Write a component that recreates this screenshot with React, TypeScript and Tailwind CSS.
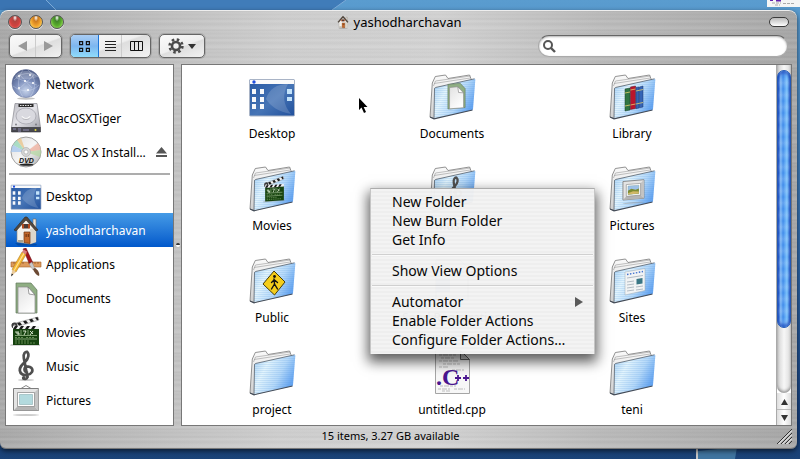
import type { ReactNode } from "react";

const font = "font-['Lucida_Grande','Noto_Sans',sans-serif]";

const metal =
  "bg-[repeating-linear-gradient(180deg,rgba(255,255,255,0.1)_0px,rgba(0,0,0,0.03)_1px,rgba(255,255,255,0.06)_3px,rgba(0,0,0,0.02)_4px,rgba(255,255,255,0.03)_7px,rgba(0,0,0,0.03)_9px,rgba(255,255,255,0.1)_11px,rgba(0,0,0,0.02)_14px,rgba(255,255,255,0.08)_17px,rgba(255,255,255,0.1)_19px),linear-gradient(90deg,#a8a8a8_0%,#b8b8b8_12%,#cecece_35%,#d2d2d2_55%,#bababa_75%,#a6a6a6_100%)]";

const aqua =
  "bg-[linear-gradient(160deg,#fafafa_0%,#efefef_50%,#dedede_54%,#f2f2f2_100%)]";

/* ---------- artwork ---------- */

function Defs() {
  return (
    <svg className="absolute size-0" aria-hidden="true">
      <defs>
        <linearGradient id="folderFront" x1="0" y1="0" x2="1" y2="0.5">
          <stop offset="0" stopColor="#a2cdf2" />
          <stop offset="0.35" stopColor="#e2f4fd" />
          <stop offset="0.7" stopColor="#b4d8f9" />
          <stop offset="1" stopColor="#66a5f1" />
        </linearGradient>
        <linearGradient id="folderBack" x1="0" y1="0" x2="0" y2="1">
          <stop offset="0" stopColor="#fafafa" />
          <stop offset="1" stopColor="#cfcfcf" />
        </linearGradient>
        <pattern id="folderLines" width="4" height="2" patternUnits="userSpaceOnUse">
          <rect width="4" height="1" fill="#4f93dd" opacity="0.16" />
        </pattern>
        <radialGradient id="globe" cx="0.5" cy="0.75" r="0.75">
          <stop offset="0" stopColor="#c5d2ea" />
          <stop offset="0.5" stopColor="#7d8fbb" />
          <stop offset="1" stopColor="#46557f" />
        </radialGradient>
        <linearGradient id="steel" x1="0" y1="0" x2="1" y2="1">
          <stop offset="0" stopColor="#bdbdc4" />
          <stop offset="0.5" stopColor="#e4e4e9" />
          <stop offset="1" stopColor="#a5a5ad" />
        </linearGradient>
        <linearGradient id="disc" x1="0" y1="0" x2="1" y2="1">
          <stop offset="0" stopColor="#dcdcdc" />
          <stop offset="0.5" stopColor="#f5f5f5" />
          <stop offset="1" stopColor="#aeaeae" />
        </linearGradient>
        <linearGradient id="deskBlue" x1="0" y1="0" x2="1" y2="1">
          <stop offset="0" stopColor="#2658a3" />
          <stop offset="0.55" stopColor="#4674b5" />
          <stop offset="1" stopColor="#21509c" />
        </linearGradient>
        <linearGradient id="paper" x1="0" y1="0" x2="0.6" y2="1">
          <stop offset="0" stopColor="#e2e2e2" />
          <stop offset="1" stopColor="#fdfdfd" />
        </linearGradient>
      </defs>
    </svg>
  );
}

function Art({ box, className, children }: { box: number; className: string; children: ReactNode }) {
  return (
    <svg viewBox={`0 0 ${box} ${box}`} className={className} aria-hidden="true">
      {children}
    </svg>
  );
}

function HouseShape() {
  return (
    <g>
      <path d="M5 29 L27 30 L26 31.5 L8 31.5 Z" fill="#000" opacity="0.2" />
      <path d="M23 5h3v9h-3z" fill="#e9e4dc" stroke="#75695c" strokeWidth="0.6" />
      <path d="M7 14 L16 5 L26 14 V28 L20 30 L7 28 Z" fill="#f4f1ec" stroke="#8d8478" strokeWidth="0.6" />
      <path d="M20 15 L26 14 V28 L20 30 Z" fill="#dcd6cb" />
      <path d="M4 16 L15 3 L17 3 L28 16 L26 17 L16 6 L6 17 Z" fill="#54483e" stroke="#2e2620" strokeWidth="0.6" />
      <path d="M14 18h6v11.500l-6-1z" fill="#c4692c" stroke="#6e3513" strokeWidth="0.7" />
      <path d="M15.500 20h1.300v3h-1.300zM17.700 20h1.300v3h-1.300z" fill="#7a3a13" />
      <path d="M13.500 10h5v4.500h-5z" fill="#4c3a35" />
      <path d="M12 10h2v4.500h-2zM18 10h2v4.500h-2z" fill="#b44a1d" />
      <path d="M8 26h5v2.500l-5-.8z" fill="#a9a28f" />
    </g>
  );
}

function ClapperShape() {
  return (
    <g>
      <path d="M1 28h29v2H0z" fill="#888" opacity="0.35" />
      <path d="M2 8 L28 1 L29 4 L3 12 Z" fill="#f4f4f4" stroke="#555" strokeWidth="0.4" />
      <path d="M7 7l3-.8 2 2.500-3 1zM13 5.200l3-.8 2 2.500-3 1zM19 3.500l3-.8 2 2.600-3 .9zM25 1.800l2.500-.7 1 2.800-1.500.4z" fill="#1c1c1c" />
      <circle cx="4.500" cy="9.500" r="3" fill="#3c3c3c" />
      <circle cx="4.500" cy="9.500" r="1.100" fill="#bbb" />
      <path d="M3 12h26v17H3z" fill="#16420f" />
      <path d="M3 10h26v3H3z" fill="#f0f0f0" />
      <path d="M5 10h3l-2 3H3zM11 10h3l-2 3H9zM17 10h3l-2 3h-3zM23 10h3l-2 3h-3z" fill="#1a1a1a" />
      <path d="M5 19.500h22M5 23h22M11 14v5M18 14v5" stroke="#9dbb8d" strokeWidth="0.8" />
      <path d="M6 15v2h3v2M8 15v4M13 15h3l-2 4M20 15l3 3M23 15l-3 4" stroke="#e4efd9" strokeWidth="0.9" fill="none" />
      <path d="M5 21.500h9M16 21.500h8M5 25h14M5 27h20" stroke="#76a062" strokeWidth="0.8" strokeDasharray="2 1" />
    </g>
  );
}

function ClefShape() {
  return (
    <g fill="none" stroke="#4f4f4f" strokeLinecap="round">
      <ellipse cx="16" cy="30" rx="8" ry="1" fill="#aaa" stroke="none" opacity="0.6" />
      <path d="M17.500 27 L13.800 8 C13 3.500 15.500 1.500 17 1.800 C19.500 4 18.500 8.500 15.500 11.500 C11.500 15 9.500 17 9.800 20.500 C10.200 24 13.500 25.500 17 25 C22 24 23.500 20.500 21.500 18 C19 15.500 14.500 16.500 14.500 19.500 C14.500 21 15.500 22 17 22.300" strokeWidth="2.700" />
      <path d="M17.500 26 C17.800 29.500 14.500 30 13 28.500" strokeWidth="2" />
      <circle cx="13.800" cy="27.800" r="1.900" fill="#4f4f4f" stroke="none" />
    </g>
  );
}

function FrameShape({ scene }: { scene?: boolean }) {
  return (
    <g>
      <ellipse cx="16" cy="31" rx="13" ry="0.9" fill="#999" opacity="0.5" />
      {!scene && <path d="M11 4.500l5-3 5 3" stroke="#888" fill="none" />}
      <path d="M3.500 4.500h25v22h-25z" fill="#e4e4e4" stroke="#7d7d7d" strokeWidth="1" />
      <path d="M3.500 26.500l5-5h15l5 5z" fill="#b4b4b4" />
      <path d="M28.500 4.500l-5 5v12l5 5z" fill="#c4c4c4" />
      <path d="M7.500 8.500h17v14h-17z" fill="#fff" stroke="#909090" strokeWidth="0.8" />
      <path d="M9.500 10.500h13v10h-13z" fill={scene ? "#9dc1e8" : "#b3dade"} stroke="#7ba0a5" strokeWidth="0.5" />
      {scene && <path d="M9.500 16l4-2 5 1.500 4-1v6h-13z" fill="#7d8c33" />}
      {scene && <path d="M9.500 19l6-2 7 1v2.500h-13z" fill="#d1b867" />}
    </g>
  );
}

function PaperShape() {
  return (
    <g>
      <path d="M6 1h15l6 7v23H6z" fill="#8fae83" stroke="#62785b" strokeWidth="0.7" />
      <path d="M8 5h10l7 8v18H8z" fill="url(#paper)" stroke="#8b8b8b" strokeWidth="0.7" />
      <path d="M18 5l1 7 6 1z" fill="#fff" stroke="#777" strokeWidth="0.7" />
    </g>
  );
}

function DesktopShape() {
  return (
    <g>
      <rect x="1.500" y="7.500" width="45" height="36.500" rx="1" fill="url(#deskBlue)" stroke="#a9b4c6" />
      <path d="M18 27 C21 17 29 12 40 12 C34 22 35 33 43 42 C31 40 22 34 18 27z" fill="#fff" opacity="0.16" />
      <path d="M2 8h44v4H2z" fill="#fafafa" />
      <circle cx="6" cy="10" r="1.700" fill="#1f4fe0" />
      <g fill="#f6f8fb">
        <path d="M4 17h4v5H4zM12 17h4v5h-4zM4 25h4v5H4zM12 25h4v5h-4zM4 32h4v5H4zM12 32h4v5h-4z" />
        <path d="M39 17h5v5h-5zM39 25h5v4h-5z" fill="#c4e3fa" />
      </g>
    </g>
  );
}

function NetworkShape() {
  return (
    <g>
      <ellipse cx="16" cy="30.500" rx="9" ry="1.200" fill="#888" opacity="0.5" />
      <circle cx="16" cy="15.500" r="14" fill="url(#globe)" stroke="#66739a" strokeWidth="0.5" />
      <path d="M4 12C9 5 22 3 28 9M3 18c8 6 18 7 26-1M13 2c-6 8-6 18 0 27M18 2c8 7 9 18 2 27M9 6l13 14M24 7L8 22M6 10l21 7" stroke="#dce5f7" strokeWidth="0.5" fill="none" opacity="0.65" />
      <g fill="#fff">
        <circle cx="9" cy="8" r="1" />
        <circle cx="20" cy="7" r="1" />
        <circle cx="15" cy="13" r="1.100" />
        <circle cx="23" cy="15" r="1.100" />
        <circle cx="9" cy="20" r="1" />
        <circle cx="18" cy="22" r="1.100" />
      </g>
      <path d="M5 9C8 1 24 1 27 9C21 12 11 12 5 9z" fill="#fff" opacity="0.22" />
    </g>
  );
}

function DriveShape() {
  return (
    <g>
      <path d="M5 1.500h22l3.500 24h-29z" fill="url(#steel)" stroke="#88888f" strokeWidth="0.7" />
      <path d="M8.500 2h15v3h-15z" fill="#2b2b2b" />
      <path d="M10 3.500h12" stroke="#ddd" strokeDasharray="1.500 1" />
      <ellipse cx="16" cy="14" rx="10" ry="8" fill="#d9d9df" stroke="#a5a5ad" strokeWidth="0.8" />
      <path d="M12 14.500c1 3 7 3 8 0" stroke="#fff" strokeWidth="1.500" fill="none" />
      <path d="M12 15.500c1 2.500 7 2.500 8 0" stroke="#85858d" strokeWidth="0.6" fill="none" />
      <path d="M1.500 25.500h29v4.500h-29z" fill="#48484f" stroke="#303036" strokeWidth="0.6" />
      <path d="M3 27h3M8 27h3M8 29h3M13 28h6" stroke="#8d8ab0" strokeWidth="1" />
      <circle cx="25.500" cy="28" r="1" fill="#e7dc3d" />
      <circle cx="6" cy="22.500" r="0.900" fill="#77777f" />
      <circle cx="26" cy="22.500" r="0.900" fill="#77777f" />
    </g>
  );
}

function DvdShape() {
  return (
    <g>
      <circle cx="16" cy="16" r="15" fill="url(#disc)" stroke="#8a8a8a" strokeWidth="0.8" />
      <path d="M16 16L3 9A15 15 0 0 1 7 4z" fill="#9bd9bb" opacity="0.8" />
      <path d="M16 16L7 4a15 15 0 0 1 4-2z" fill="#e8c58d" opacity="0.8" />
      <path d="M16 16L1 16A15 15 0 0 1 3 9z" fill="#9fc3ef" opacity="0.7" />
      <path d="M16 16L28 7a15 15 0 0 1 3 7z" fill="#f0b3a1" opacity="0.8" />
      <path d="M16 16l15-2a15 15 0 0 1-1 7z" fill="#b3d7a0" opacity="0.7" />
      <circle cx="16" cy="16" r="4.500" fill="#d5d5d5" stroke="#aaa" strokeWidth="0.6" />
      <circle cx="16" cy="16" r="2" fill="#fff" stroke="#999" strokeWidth="0.5" />
      <text x="16.500" y="27" textAnchor="middle" fontSize="7" fontWeight="900" fontStyle="italic" fontFamily="Liberation Sans, sans-serif" fill="#111">DVD</text>
      <ellipse cx="16.500" cy="28.700" rx="7" ry="1.100" fill="#222" />
    </g>
  );
}

function AppsShape() {
  return (
    <g>
      <path d="M1 14h30v5H1z" fill="#dd9a5c" stroke="#a3622d" strokeWidth="0.6" />
      <path d="M4 14v2M7 14v2M10 14v2M13 14v2M19 14v2M22 14v2M25 14v2M28 14v2" stroke="#7d451b" strokeWidth="0.6" />
      <path d="M13 1l3-1 7 15-3 2z" fill="#a5161c" stroke="#5f0c10" strokeWidth="0.5" />
      <path d="M19 16l3-2 3 7-2 1z" fill="#c9c9c9" stroke="#888" strokeWidth="0.4" />
      <path d="M23 21l2-1c3 2 5 5 4 8-3-1-5-4-6-7z" fill="#6c4a34" />
      <path d="M12 4l4 2.500L6 24l-4-2.500z" fill="#f4b632" stroke="#a4711a" strokeWidth="0.5" />
      <path d="M13.500 5l1 .6L4.500 23l-1-.6z" fill="#fde396" />
      <path d="M12 4l1.500-2.500 3.500 2-1 3z" fill="#d9837e" />
      <path d="M2 21.500L6 24l-4.500 4z" fill="#eacb9d" />
      <path d="M1.700 25.500l1.600 1L1 28.500z" fill="#222" />
    </g>
  );
}

function Folder({ children }: { children?: ReactNode }) {
  return (
    <Art box={48} className="size-12">
      <path d="M2 45 L4.300 11 L7.300 4.500 L17.500 3 L20 6.500 L41.500 3 L43.500 8 L42 36 L6 46.500 Z" fill="url(#folderBack)" stroke="#777" strokeWidth="0.8" />
      <path d="M5.500 14L7.500 9l35-5M6 11.500L42 6" stroke="#999" strokeWidth="0.6" fill="none" />
      <path d="M7.500 15.500 L46.500 6.800 Q47.500 6.700 47.300 8 L45 37 Q44.900 38 44 38.300 L6 46.500 L6.500 17 Q6.500 15.800 7.500 15.500Z" fill="url(#folderFront)" />
      <path d="M7.500 15.500 L46.500 6.800 Q47.500 6.700 47.300 8 L45 37 Q44.900 38 44 38.300 L6 46.500 L6.500 17 Q6.500 15.800 7.500 15.500Z" fill="url(#folderLines)" />
      <path d="M6 46.500L6.500 17Q6.500 15.800 7.500 15.500L46.500 6.800" fill="none" stroke="#555f6b" strokeWidth="0.8" />
      <path d="M2 45L6 46.800L44.500 38" fill="none" stroke="#444c58" strokeWidth="1.100" />
      {children}
    </Art>
  );
}

function CppFile() {
  return (
    <Art box={48} className="size-12">
      <path d="M7.500 2.500h25l9 9v34h-34z" fill="#f7f7f7" stroke="#a5a5a5" />
      <path d="M32.500 2.500v9h9z" fill="#cfcfcf" stroke="#555" strokeWidth="0.9" />
      <path d="M11 7h17M13 10h14M11 13h19M15 16h17M11 19h10M24 22h12M12 38h16M10 41h12M26 41h11M14 43h8" stroke="#b5b5b5" strokeWidth="0.9" strokeDasharray="3 1 5 1" />
      <text x="8" y="37" fontSize="24" fontWeight="700" fontFamily="Liberation Serif, serif" fill="#4a1690">.C</text>
      <path d="M27 30h6M30 27v6M35 30h6M38 27v6" stroke="#4a1690" strokeWidth="1.800" />
    </Art>
  );
}

/* ---------- data ---------- */

const side = "size-8 shrink-0";

const volumes = [
  { name: "Network", art: <NetworkShape /> },
  { name: "MacOSXTiger", art: <DriveShape /> },
  { name: "Mac OS X Install…", art: <DvdShape />, eject: true },
];

const places = [
  { name: "Desktop", art: <g transform="scale(0.667)"><DesktopShape /></g> },
  { name: "yashodharchavan", art: <HouseShape />, selected: true },
  { name: "Applications", art: <AppsShape /> },
  { name: "Documents", art: <PaperShape /> },
  { name: "Movies", art: <ClapperShape /> },
  { name: "Music", art: <ClefShape /> },
  { name: "Pictures", art: <FrameShape /> },
];

const files = [
  { name: "Desktop", icon: <Art box={48} className="size-12"><DesktopShape /></Art> },
  { name: "Documents", icon: <Folder><g transform="translate(15 12) skewY(-5) scale(0.82)"><PaperShape /></g></Folder> },
  {
    name: "Library",
    icon: (
      <Folder>
        <g strokeWidth="0.5">
          <path d="M17 17l5-1v22l-5 1z" fill="#2f7443" stroke="#153c20" />
          <path d="M22.500 15l5-1v22.500l-5 1z" fill="#b9152c" stroke="#5f0b18" />
          <path d="M28 15.500l3-.5v21l-3 .7zM31.500 15l3.500-1v21l-3.500.8z" fill="#3564b5" stroke="#18356e" />
        </g>
        <path d="M17 21l5-1M17 34l5-1M22.500 18l5-1M22.500 33l5-1M28 19l7-1.500M28 32l7-1.500" stroke="#e6cf6c" strokeWidth="0.8" />
      </Folder>
    ),
  },
  { name: "Movies", icon: <Folder><g transform="translate(15 13) skewY(-4) scale(0.72 0.85)"><ClapperShape /></g></Folder> },
  { name: "Music", icon: <Folder><g transform="translate(14 12) scale(0.85)"><ClefShape /></g></Folder> },
  { name: "Pictures", icon: <Folder><g transform="translate(12 14) skewY(-5) scale(0.84)"><FrameShape scene /></g></Folder> },
  {
    name: "Public",
    icon: (
      <Folder>
        <path d="M26 15l11 11-10.500 13L15 28z" fill="#f4cd1b" stroke="#473c07" strokeWidth="1" strokeLinejoin="round" />
        <circle cx="26.500" cy="20.500" r="1.400" fill="#111" />
        <path d="M26 23l.5 5 3 5M26.500 28l-3 5M26 24l-2.500 2.500M26.500 24l3 2.500" stroke="#111" strokeWidth="1.400" fill="none" strokeLinecap="round" />
      </Folder>
    ),
  },
  { name: "Send Registration", icon: <Art box={48} className="size-12"><path d="M8 4h24l8 8v32H8z" fill="#f4f4f4" stroke="#999" /><path d="M8 22h14v14H8z" fill="#7da7e0" /></Art> },
  {
    name: "Sites",
    icon: (
      <Folder>
        <path d="M17 16l20-3.500v22L17 39z" fill="#f1f3f4" stroke="#9aa9b5" strokeWidth="0.5" />
        <path d="M19 18.500l16-3" stroke="#3e70cf" strokeWidth="1.400" strokeDasharray="1.500 1.500" />
        <path d="M19 22l16-2.500M19 26l7-1M19 29l7-1M19 32l7-1M19 35l7-1M28 31l7-1M28 34l7-1" stroke="#aab4bd" strokeWidth="0.9" />
        <path d="M28.500 23l6-1v5.500l-6 1z" fill="#3a7684" />
      </Folder>
    ),
  },
  { name: "project", icon: <Folder /> },
  { name: "untitled.cpp", icon: <CppFile /> },
  { name: "teni", icon: <Folder /> },
];

const menuGroups = [
  ["New Folder", "New Burn Folder", "Get Info"],
  ["Show View Options"],
  ["Automator", "Enable Folder Actions", "Configure Folder Actions…"],
];

/* ---------- window parts ---------- */

function TitleBar() {
  const light = "size-3.5 rounded-full border border-[#555] shadow-[0_1px_0_rgba(255,255,255,0.7)]";
  return (
    <header className="grid h-6 shrink-0 grid-cols-[1fr_auto_1fr] items-center px-2">
      <div className="flex gap-[7px]">
        <button aria-label="Close" className={`${light} bg-[radial-gradient(ellipse_at_50%_15%,#fff_0%,#b3443f_25%,#d3433f_60%,#ff9d92_100%)]`} />
        <button aria-label="Minimize" className={`${light} bg-[radial-gradient(ellipse_at_50%_15%,#fff_0%,#cc7b20_25%,#f0a12c_55%,#ffee7c_100%)]`} />
        <button aria-label="Zoom" className={`${light} bg-[radial-gradient(ellipse_at_50%_15%,#fff_0%,#42852a_25%,#59ad2b_55%,#bff584_100%)]`} />
      </div>
      <h1 className="flex items-center gap-1 text-[13px] leading-4">
        <Art box={32} className="size-3.5"><HouseShape /></Art>
        yashodharchavan
      </h1>
      <button aria-label="Toggle toolbar" className="h-2.5 w-5 justify-self-end rounded-full border-[1.5px] border-[#3c3c3c] bg-linear-to-b from-[#bbb] to-white" />
    </header>
  );
}

function Toolbar() {
  const group = "flex h-6 overflow-hidden rounded-[5px] border border-[#666] shadow-[0_0_0_1px_rgba(0,0,0,0.12)] " + aqua;
  const cell = "flex items-center justify-center";
  return (
    <div className="flex shrink-0 items-center gap-2 px-[9px]">
      <div className={`${group} w-[53px]`}>
        <button aria-label="Back" className={`${cell} flex-1 border-r border-[#ccc]`}>
          <svg viewBox="0 0 9 10" className="h-2.5 w-[9px]"><path d="M9 0v10L0 5z" fill="#999" /></svg>
        </button>
        <button aria-label="Forward" className={`${cell} flex-1`}>
          <svg viewBox="0 0 9 10" className="h-2.5 w-[9px]"><path d="M0 0v10l9-5z" fill="#999" /></svg>
        </button>
      </div>
      <div className={`${group} w-[81px]`}>
        <button aria-label="Icon view" className={`${cell} w-7 border-r border-[#1b74d8] bg-linear-to-b from-[#a9cdf4] via-[#7db6f0] to-[#8fdcfb]`}>
          <svg viewBox="0 0 11 11" className="size-[11px]" fill="none" stroke="#111" strokeWidth="1.200"><path d="M.6.6h3v3h-3zM7.400.6h3v3h-3zM.6 7.400h3v3h-3zM7.400 7.400h3v3h-3z" /></svg>
        </button>
        <button aria-label="List view" className={`${cell} flex-1 border-r border-[#ccc]`}>
          <svg viewBox="0 0 11 10" className="h-2.5 w-[11px]" stroke="#222"><path d="M0 .5h11M0 3.500h11M0 6.500h11M0 9.500h11" /></svg>
        </button>
        <button aria-label="Column view" className={`${cell} w-7`}>
          <svg viewBox="0 0 13 10" className="h-2.5 w-[13px]" fill="none" stroke="#111"><path d="M.5.5h12v9H.5zM4.500.5v9M8.500.5v9" /></svg>
        </button>
      </div>
      <button aria-label="Action" className={`${group} w-[46px] items-center justify-center gap-1`}>
        <svg viewBox="0 0 16 16" className="size-4" fill="none" stroke="#4a4a4a">
          <circle cx="8" cy="8" r="4" strokeWidth="2.600" />
          <circle cx="8" cy="8" r="6.400" strokeWidth="2.600" strokeDasharray="2.510 2.516" />
        </svg>
        <svg viewBox="0 0 8 5" className="h-[5px] w-2"><path d="M0 0h8L4 5z" fill="#333" /></svg>
      </button>
      <label className="ml-auto flex h-[22px] w-[250px] items-center rounded-full border border-[#aaa] border-t-[#666] bg-white pl-1 shadow-[inset_0_1px_2px_rgba(0,0,0,0.3)]">
        <svg viewBox="0 0 13 13" className="size-[13px]" fill="none" stroke="#555" strokeWidth="2"><circle cx="5" cy="5" r="4" /><path d="M8 8l4 4" strokeWidth="2.400" /></svg>
        <input type="text" aria-label="Search" className="ml-1 min-w-0 flex-1 bg-transparent text-xs outline-none" />
      </label>
    </div>
  );
}

function SideRow({ name, art, selected, eject }: { name: string; art: ReactNode; selected?: boolean; eject?: boolean }) {
  return (
    <li className={`flex h-[34px] items-center gap-1 pl-1 ${selected ? "bg-linear-to-b from-[#459be6] to-[#0058cb] text-white" : ""}`}>
      <button className="flex min-w-0 flex-1 items-center gap-1 text-left">
        <Art box={32} className={side}>{art}</Art>
        <span className="pt-0.5 whitespace-nowrap">{name}</span>
      </button>
      {eject && (
        <button aria-label="Eject" className="mr-1.5">
          <svg viewBox="0 0 11 11" className="size-[11px]" fill="#555"><path d="M5.500 0L11 6.500H0zM0 8h11v2H0z" /></svg>
        </button>
      )}
    </li>
  );
}

function Sidebar() {
  return (
    <nav className="w-[169px] shrink-0 overflow-hidden border border-[#777] bg-white pt-0.5 text-xs leading-4">
      <ul>{volumes.map((v) => <SideRow key={v.name} {...v} />)}</ul>
      <hr className="mx-[3px] my-1 h-0.5 border-0 bg-[#adadad]" />
      <ul>{places.map((p) => <SideRow key={p.name} {...p} />)}</ul>
    </nav>
  );
}

function ScrollBar() {
  const arrow = "flex h-4 shrink-0 items-center justify-center border-t border-[#bbb] bg-linear-to-r from-[#ddd] via-white to-[#ddd]";
  return (
    <div className="flex w-[15px] shrink-0 flex-col border-l border-[#aaa]">
      <div className="flex flex-1 flex-col rounded-b-full bg-linear-to-r from-[#cfcfcf] via-[#f7f7f7] to-[#dcdcdc] pt-[5px] shadow-[inset_0_-2px_3px_rgba(0,0,0,0.35)]">
        <div className="h-4/5 rounded-full border border-[#2358b4] bg-[repeating-linear-gradient(180deg,rgba(255,255,255,0.16)_0px,rgba(255,255,255,0)_6px,rgba(255,255,255,0.16)_12px),linear-gradient(90deg,#1c55c9_0%,#7db9f6_22%,#3f8bea_42%,#7cc3fd_75%,#3570cf_100%)] shadow-[inset_0_-3px_3px_rgba(20,60,180,0.6),inset_0_3px_3px_rgba(20,60,180,0.6)]" />
      </div>
      <button aria-label="Scroll up" className={`${arrow} border-t-transparent`}>
        <svg viewBox="0 0 7 6" className="h-1.5 w-[7px]"><path d="M3.500 0L7 6H0z" fill="#333" /></svg>
      </button>
      <button aria-label="Scroll down" className={arrow}>
        <svg viewBox="0 0 7 6" className="h-1.5 w-[7px]"><path d="M0 0h7L3.500 6z" fill="#333" /></svg>
      </button>
    </div>
  );
}

function ContextMenu() {
  return (
    <div role="menu" className="absolute top-[188px] left-[370px] w-[225px] border border-b-0 border-[#c4c4c4] border-t-[#aaa] bg-[repeating-linear-gradient(180deg,#f3f3f3_0px,#f3f3f3_2px,#eeeeee_2px,#eeeeee_4px)] pt-[3px] pb-[5px] text-sm leading-[19px] opacity-97 shadow-[0_6px_12px_2px_rgba(0,0,0,0.65)]">
      {menuGroups.map((items, i) => (
        <div key={items[0]}>
          {i > 0 && <div role="separator" className="mx-px my-[5px] h-0.5 border-t border-[#cfcfcf] bg-[#fafafa]" />}
          {items.map((item) => (
            <button key={item} role="menuitem" className="flex h-[19px] w-full items-center justify-between pr-[11px] pl-[21px] text-left whitespace-nowrap">
              {item}
              {item === "Automator" && <svg viewBox="0 0 8 10" className="h-2.5 w-2"><path d="M0 0l8 5-8 5z" fill="#555" /></svg>}
            </button>
          ))}
        </div>
      ))}
    </div>
  );
}

function Backdrop() {
  return (
    <div aria-hidden="true">
      <svg viewBox="0 0 350 10" className="absolute top-0 left-0 h-2.5 w-[350px]">
        <path d="M0 0h46l10 10H0z" fill="#3a74b2" />
        <path d="M46 0h300l-14 10H56z" fill="#407cb9" />
        <path d="M46 0l10 10M346 0l-14 10" stroke="#7dabd7" />
      </svg>
      <svg viewBox="0 0 33 8" className="absolute top-0 right-0 h-2 w-[33px]">
        <path d="M0 0h33v7H0z" fill="#f5f5f5" />
        <path d="M3 0h3v1H3zM9 0h5v1.500H9z" fill="#6322ae" />
        <path d="M5 3h9M16 3.500h11M8 5h5" stroke="#aaa" strokeDasharray="3 1" />
      </svg>
      <svg viewBox="0 0 42 12" className="absolute bottom-0 left-[695px] h-3 w-[42px]">
        <path d="M1 0h2v12H1z" fill="#c5c5c5" />
        <path d="M3 4l39-4-2 12H3z" fill="#3f749f" />
      </svg>
    </div>
  );
}

export default function App() {
  return (
    <div className={`relative flex h-screen flex-col overflow-hidden bg-[linear-gradient(180deg,#5a9ccf_0%,#4585c0_25%,#2a62a4_60%,#163f7c_92%,#1b4377_100%)] text-black ${font}`}>
      <Defs />
      <Backdrop />
      <div className={`relative mt-2.5 mr-[3px] mb-2.5 flex min-h-0 flex-1 flex-col rounded-t-lg rounded-b-md shadow-[inset_0_1px_0_#eee,inset_0_-1px_0_#777,0_2px_5px_rgba(0,0,0,0.6)] ${metal}`}>
        <TitleBar />
        <Toolbar />
        <div className="mt-1.5 flex min-h-0 flex-1 px-[5px]">
          <Sidebar />
          <div className="flex w-[7px] shrink-0 items-center justify-center">
            <span className="size-1 rounded-full border-t-2 border-[#333] bg-white" />
          </div>
          <main className="flex min-w-0 flex-1 border border-[#777] bg-white">
            <ul className="grid min-h-0 flex-1 grid-cols-[repeat(auto-fill,180px)] content-start gap-y-[21px] overflow-hidden pt-[7px]">
              {files.map((f) => (
                <li key={f.name} className="flex flex-col items-center gap-[5px] text-xs leading-[18px]">
                  {f.icon}
                  {f.name}
                </li>
              ))}
            </ul>
            <ScrollBar />
          </main>
        </div>
        <footer className="relative flex h-[23px] shrink-0 items-center justify-center pr-4 pb-[3px] text-[11px] leading-4">
          15 items, 3.27 GB available
          <svg viewBox="0 0 15 15" className="absolute right-[5px] bottom-[5px] size-[15px]" stroke="#333">
            <path d="M0 15L15 0M4 15L15 4M8 15l7-7M12 15l3-3" />
            <path d="M1.500 15L15 1.500M5.500 15L15 5.500M9.500 15L15 9.500" stroke="#fff" />
          </svg>
        </footer>
      </div>
      <ContextMenu />
      <svg viewBox="0 0 9 15" className="absolute top-[98px] left-[359px] h-[15px] w-[9px]" aria-hidden="true">
        <path d="M0 0v12l2.500-2.500L5 15l2-1-2.300-5H8.500z" fill="#000" />
      </svg>
    </div>
  );
}
